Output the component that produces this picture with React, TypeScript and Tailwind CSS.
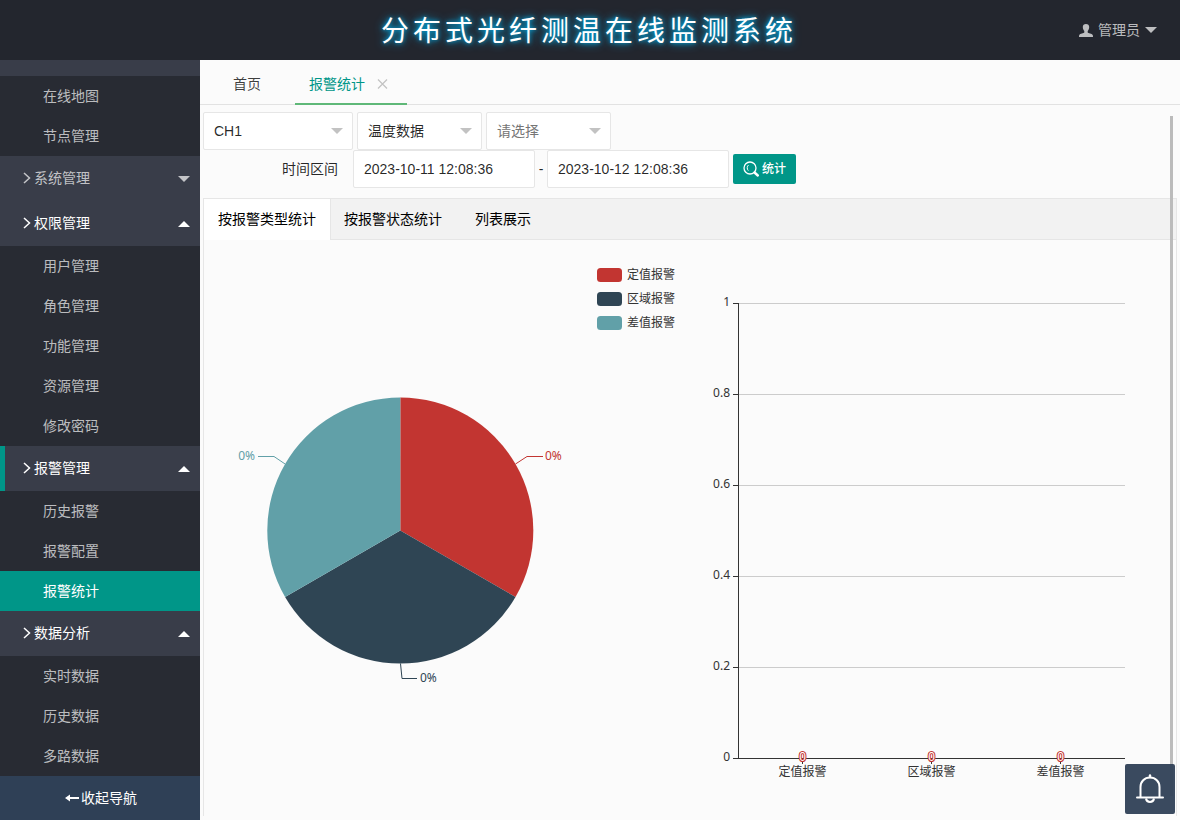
import { useState } from "react";
import type { ReactNode } from "react";
import clsx from "clsx";

type NavGroup = {
  title: string;
  open: boolean;
  current?: boolean;
  items: string[];
};

const mapItems = ["在线地图", "节点管理"];

const navGroups: NavGroup[] = [
  { title: "系统管理", open: false, items: [] },
  {
    title: "权限管理",
    open: true,
    items: ["用户管理", "角色管理", "功能管理", "资源管理", "修改密码"],
  },
  {
    title: "报警管理",
    open: true,
    current: true,
    items: ["历史报警", "报警配置", "报警统计"],
  },
  { title: "数据分析", open: true, items: ["实时数据", "历史数据", "多路数据"] },
];

const alarmTypes = [
  { name: "定值报警", color: "#c23531", value: 0 },
  { name: "区域报警", color: "#2f4554", value: 0 },
  { name: "差值报警", color: "#61a0a8", value: 0 },
];

const statTabs = ["按报警类型统计", "按报警状态统计", "列表展示"];

function Caret({ up = false }: { up?: boolean }) {
  return (
    <svg width="12" height="6" viewBox="0 0 12 6" fill="currentColor" aria-hidden="true">
      <path d={up ? "M0 6 6 0l6 6z" : "M0 0h12L6 6z"} />
    </svg>
  );
}

function UserIcon() {
  return (
    <svg width="14" height="13" viewBox="0 0 14 13" fill="currentColor" aria-hidden="true">
      <path d="M7 0c2 0 3.200 1.200 3.200 3 0 1.700-.7 3.200-1.500 4v1.600c.3.700 4.300 1 5 2.400.3.600.3 2 .3 2H0s0-1.400.3-2c.7-1.400 4.700-1.700 5-2.400V7c-.8-.8-1.500-2.300-1.500-4C3.800 1.200 5 0 7 0z" />
    </svg>
  );
}

function SearchIcon() {
  return (
    <svg width="16" height="16" viewBox="0 0 16 16" fill="none" stroke="currentColor" aria-hidden="true">
      <circle cx="7" cy="7" r="6" strokeWidth="1.300" />
      <path d="M5.500 4C4 5.200 3.700 8 5.300 9.600" strokeWidth="1" />
      <path d="m11.500 11.500 3.300 3" strokeWidth="2.400" strokeLinecap="round" />
    </svg>
  );
}

function BellIcon() {
  return (
    <svg width="28" height="30" viewBox="0 0 28 30" fill="none" stroke="currentColor" aria-hidden="true">
      <path d="M4.500 23V13C4.500 7.500 8.500 3.500 14 3.500s9.500 4 9.500 9.500v10" strokeWidth="2" />
      <path d="M1 23.500h26" strokeWidth="2" strokeLinecap="round" />
      <path d="M14 3V1.500" strokeWidth="2.400" strokeLinecap="round" />
      <path d="M10 24.500c.4 2.400 2 3.500 4 3.500s3.600-1.100 4-3.500" strokeWidth="2" />
    </svg>
  );
}

function NavItem({ label, active }: { label: string; active: boolean }) {
  return (
    <a
      href="#"
      className={clsx(
        "flex h-10 items-center pl-[43px]",
        active ? "bg-[#009688] text-white" : "bg-[#282b33] text-white/70"
      )}
    >
      {label}
    </a>
  );
}

function Sidebar() {
  return (
    <aside className="flex w-[200px] shrink-0 flex-col bg-[#393d49]">
      <nav className="grow pt-4">
        {mapItems.map((item) => (
          <NavItem key={item} label={item} active={false} />
        ))}
        {navGroups.map((group) => (
          <div key={group.title}>
            <button
              type="button"
              className={clsx(
                "flex h-[45px] w-full items-center border-l-[5px] pr-2.5 pl-[18px]",
                group.current ? "border-[#009688]" : "border-transparent",
                group.open ? "text-white" : "text-white/70"
              )}
            >
              <span className="flex grow items-center gap-[3px] pb-0.5">
                <svg width="8" height="12" viewBox="0 0 8 12" fill="none" stroke="currentColor" strokeWidth="1.500" aria-hidden="true">
                  <path d="m1 1 5.500 5L1 11" />
                </svg>
                {group.title}
              </span>
              <Caret up={group.open} />
            </button>
            {group.items.map((item) => (
              <NavItem key={item} label={item} active={item === "报警统计"} />
            ))}
          </div>
        ))}
      </nav>
      <button type="button" className="flex h-11 items-center justify-center gap-0.5 bg-[#2f4056] pl-0.5 text-white">
        <svg width="14" height="8" viewBox="0 0 14 8" fill="currentColor" aria-hidden="true">
          <path d="M0 4 5 .500V3h9v2H5v2.500z" />
        </svg>
        收起导航
      </button>
    </aside>
  );
}

type SelectBoxProps = {
  label: string;
  className: string;
  children: ReactNode;
};

function SelectBox({ label, className, children }: SelectBoxProps) {
  return (
    <div className="relative">
      <select
        aria-label={label}
        className={clsx(
          "h-[38px] appearance-none rounded-xs border border-[#e6e6e6] bg-white pr-8 pl-2.5",
          className
        )}
      >
        {children}
      </select>
      <span className="pointer-events-none absolute inset-y-0 right-2.5 flex items-center text-[#c2c2c2]">
        <Caret />
      </span>
    </div>
  );
}

function Filters() {
  return (
    <form className="text-black/85">
      <div className="flex gap-1">
        <SelectBox label="通道" className="w-[150px]">
          <option>CH1</option>
        </SelectBox>
        <SelectBox label="数据类型" className="w-[125px]">
          <option>温度数据</option>
        </SelectBox>
        <SelectBox label="分区" className="w-[125px] text-[#757575]">
          <option>请选择</option>
        </SelectBox>
      </div>
      <div className="flex items-center">
        <label htmlFor="start-time" className="w-[150px] pr-[15px] text-right">
          时间区间
        </label>
        <input
          id="start-time"
          type="text"
          defaultValue="2023-10-11 12:08:36"
          className="h-[38px] w-[182px] rounded-xs border border-[#e6e6e6] bg-white pl-2.5"
        />
        <span className="w-3 text-center">-</span>
        <input
          type="text"
          aria-label="结束时间"
          defaultValue="2023-10-12 12:08:36"
          className="h-[38px] w-[182px] rounded-xs border border-[#e6e6e6] bg-white pl-2.5"
        />
        <button
          type="button"
          className="ml-1 flex h-[30px] items-center gap-[3px] rounded-xs bg-[#009688] px-2.5 text-xs font-medium text-white"
        >
          <SearchIcon />
          统计
        </button>
      </div>
    </form>
  );
}

function PieChart() {
  return (
    <svg viewBox="0 0 486 576" className="w-1/2 font-['Noto_Sans','Noto_Sans_CJK_SC',sans-serif] text-xs" role="img" aria-label="报警类型占比">
      <path d="M196.300 290.500V157.500A133 133 0 0 1 311.500 357z" fill="#c23531" />
      <path d="M196.300 290.500 311.500 357A133 133 0 0 1 81.100 357z" fill="#2f4554" />
      <path d="M196.300 290.500 81.100 357A133 133 0 0 1 196.300 157.500z" fill="#61a0a8" />

      <g fill="none">
        <path d="M311.500 224 323 216.500h16" stroke="#c23531" />
        <path d="M196.500 423.500 198 438.500h15" stroke="#2f4554" />
        <path d="M81.100 224 70 216.500H54" stroke="#61a0a8" />
      </g>
      <text x="341" y="220" fill="#c23531">0%</text>
      <text x="216" y="442" fill="#2f4554">0%</text>
      <text x="51" y="220" textAnchor="end" fill="#61a0a8">0%</text>

      {alarmTypes.map((type, i) => (
        <g key={type.name}>
          <rect x="393" y={28 + i * 24} width="25" height="14" rx="3.500" fill={type.color} />
          <text x="423" y={39 + i * 24} fill="#333">{type.name}</text>
        </g>
      ))}
    </svg>
  );
}

function BarChart() {
  const ticks = [1, 0.8, 0.6, 0.4, 0.2, 0];

  return (
    <svg viewBox="0 0 486 576" className="w-1/2 font-['Noto_Sans','Noto_Sans_CJK_SC',sans-serif] text-xs" role="img" aria-label="报警数量">
      {ticks.map((tick, i) => (
        <g key={tick}>
          <path d={`M49 ${63.5 + i * 91}H435`} stroke={tick === 0 ? "#333" : "#ccc"} />
          <path d={`M43 ${63.5 + i * 91}h5`} stroke="#333" />
          <text x="40" y={66 + i * 91} textAnchor="end" fill="#333">{tick}</text>
        </g>
      ))}
      <path d="M48.500 63v456" stroke="#333" />
      {alarmTypes.map((type, i) => (
        <g key={type.name} textAnchor="middle">
          <path d={`M${112.5 + i * 129} 519v5`} stroke="#333" />
          <text
            x={112.5 + i * 129}
            y="521"
            fill="#fff"
            stroke="#c23531"
            strokeWidth="2"
            paintOrder="stroke"
            className="font-['Liberation_Sans',sans-serif]"
          >
            {type.value}
          </text>
          <text x={112.5 + i * 129} y="536" fill="#333">{type.name}</text>
        </g>
      ))}
    </svg>
  );
}

export default function App() {
  const [activeTab, setActiveTab] = useState(statTabs[0]);

  return (
    <div className="flex min-h-screen flex-col bg-[#fbfbfb] font-['Liberation_Sans','Noto_Sans_CJK_SC',sans-serif] text-sm">
      <header className="grid h-[60px] grid-cols-[1fr_auto_1fr] items-center bg-[#23262e]">
        <h1 className="col-start-2 pt-1 pr-0.5 text-[28px] tracking-[4px] text-white [text-shadow:0_0_10px_#00a7e0,0_0_4px_#00a7e0]">
          分布式光纤测温在线监测系统
        </h1>
        <button type="button" className="mr-[23px] flex items-center gap-[5px] justify-self-end text-white/70">
          <UserIcon />
          管理员
          <Caret />
        </button>
      </header>

      <div className="flex grow">
        <Sidebar />

        <main className="relative flex min-w-0 grow flex-col">
          <div className="flex h-[45px] border-b border-[#e2e2e2] pl-[18px]">
            <button type="button" className="px-[15px] pt-1 text-black/75">
              首页
            </button>
            <div className="-mb-px ml-[19px] flex items-center gap-3 border-b-2 border-[#5fb878] pt-1 pr-[19px] pl-3.5 text-[#009688]">
              <button type="button">报警统计</button>
              <button type="button" aria-label="关闭" className="text-[#c2c2c2]">
                <svg width="11" height="10" viewBox="0 0 11 10" stroke="currentColor" strokeWidth="1.200" aria-hidden="true">
                  <path d="m1 .500 9 9M10 .500l-9 9" />
                </svg>
              </button>
            </div>
          </div>

          <div className="flex grow flex-col px-[3px] pt-[7px] pb-1">
            <Filters />

            <section className="mt-2.5 grow border border-b-0 border-[#e6e6e6]">
              <div role="tablist" className="flex h-[41px] border-b border-[#e6e6e6] bg-[#f2f2f2]">
                {statTabs.map((tab) => (
                  <button
                    key={tab}
                    type="button"
                    role="tab"
                    aria-selected={tab === activeTab}
                    onClick={() => setActiveTab(tab)}
                    className={clsx(
                      "min-w-[94px] px-3.5 text-black",
                      tab === activeTab && "-mr-px -mb-px border-r border-[#e6e6e6] bg-white pb-0.5"
                    )}
                  >
                    {tab}
                  </button>
                ))}
              </div>
              <div className="flex">
                <PieChart />
                <BarChart />
              </div>
            </section>
          </div>

          <div className="absolute top-14 right-[7px] bottom-6 w-[3px] bg-[#bbb]" />
        </main>
      </div>

      <button
        type="button"
        aria-label="报警通知"
        className="fixed right-[5px] bottom-1.5 flex size-[50px] items-center justify-center rounded-xs bg-[#2f4056]/95 text-white"
      >
        <BellIcon />
      </button>
    </div>
  );
}
